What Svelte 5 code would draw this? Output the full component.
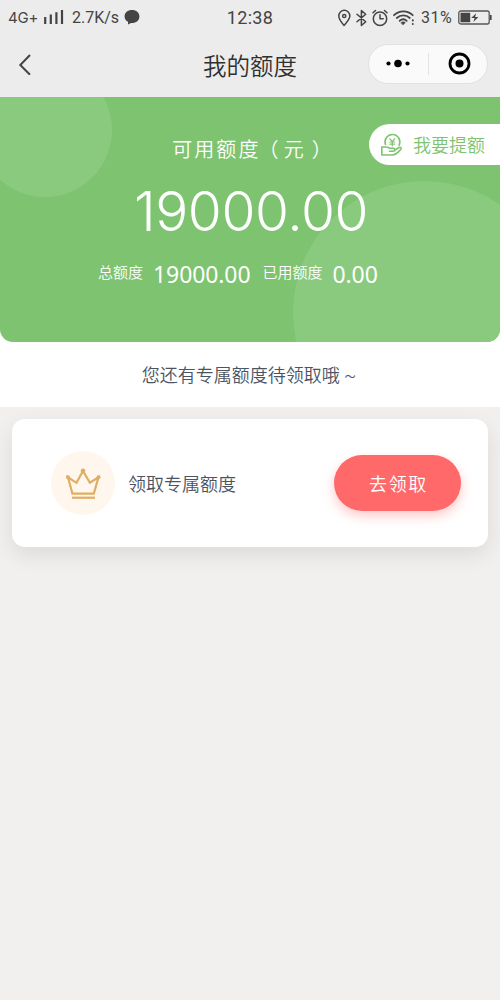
<script>
  const total = "19000.00";
  const used = "0.00";
  const available = "19000.00";
</script>

<style>
  :global(body) {
    margin: 0;
    background: #f1f0ef;
    font-family: Roboto, "Noto Sans CJK SC", sans-serif;
  }

  svg {
    display: block;
    flex: none;
    fill: none;
  }

  .page {
    min-height: 1000px;
    overflow: hidden;
    font-weight: 350;
  }

  .top {
    height: 97px;
    background: #ececec;
    color: #444;
  }

  .status {
    display: grid;
    grid-template-columns: 1fr auto 1fr;
    align-items: center;
    height: 34px;
    padding: 0 8px;
    box-sizing: border-box;
    font-size: 16px;
    font-weight: 400;
    line-height: 34px;
  }
  .left,
  .right {
    display: flex;
    align-items: center;
  }
  .left span {
    white-space: nowrap;
  }
  .network {
    width: 31px;
    margin-top: 1px;
    font-family: Inter, sans-serif;
    font-size: 15px;
    letter-spacing: -0.2px;
  }
  .signal {
    margin: 0 8px 0 5px;
  }
  .speed {
    width: 47px;
  }
  .chat {
    margin-left: 5px;
  }
  .time {
    font-size: 18px;
    letter-spacing: 0.3px;
  }
  .right {
    justify-content: flex-end;
  }
  .percent {
    margin: 0 6px 0 6px;
    letter-spacing: 0.4px;
  }

  .nav {
    display: grid;
    grid-template-columns: 1fr auto 1fr;
    align-items: center;
    height: 59px;
    padding: 0 12px 0 18px;
  }
  h1 {
    margin: 7px 6px 0 0;
    color: #303030;
    font-size: 23.5px;
    font-weight: 350;
    line-height: 32px;
  }
  .capsule {
    display: flex;
    align-items: center;
    justify-self: end;
    box-sizing: border-box;
    width: 120px;
    height: 40px;
    border: 1px solid #e2e2e2;
    border-radius: 20px;
    background: #fafafa;
  }

  .notice-wrap {
    background: #fff;
  }

  .hero {
    position: relative;
    overflow: hidden;
    box-sizing: border-box;
    height: 245px;
    padding-top: 38px;
    border-radius: 0 0 13px 13px;
    background: #7dc370;
    color: #fff;
    text-align: center;
  }
  .bubble {
    position: absolute;
    border-radius: 50%;
    background: #8aca7f;
  }
  .bubble.small {
    left: -22px;
    top: -34px;
    width: 134px;
    height: 134px;
  }
  .bubble.big {
    left: 293px;
    top: 84px;
    width: 263px;
    height: 263px;
  }
  .raise {
    position: absolute;
    top: 27px;
    right: 0;
    display: flex;
    align-items: center;
    box-sizing: border-box;
    width: 131px;
    height: 41px;
    padding-left: 11px;
    border-radius: 21px 0 0 21px;
    background: #fff;
    color: #7dc370;
    font-size: 18px;
    line-height: 41px;
  }
  .raise span {
    padding-top: 2px;
  }
  .raise svg {
    margin-right: 9px;
  }
  .label,
  .amount,
  .detail {
    position: relative;
  }
  .label {
    padding-left: 6px;
    font-size: 20px;
    line-height: 30px;
    letter-spacing: 2.1px;
  }
  .open {
    margin: 0 3px 0 -2px;
  }
  .close {
    margin-left: 6px;
  }
  .amount {
    margin-top: 14px;
    padding-left: 2px;
    font-family: Inter, sans-serif;
    font-size: 55px;
    font-weight: 300;
    line-height: 64px;
    letter-spacing: -0.4px;
  }
  .detail {
    display: flex;
    align-items: center;
    padding: 13px 0 0 98px;
    font-size: 15px;
    line-height: 30px;
  }
  .detail span {
    padding-top: 1px;
  }
  .detail b {
    margin: 3px 12px 0 10px;
    font-family: "Noto Sans", sans-serif;
    font-size: 23px;
    font-weight: 400;
    letter-spacing: -0.1px;
  }

  .notice {
    height: 65px;
    margin: 0;
    padding-right: 2px;
    color: #4b5462;
    font-size: 18px;
    line-height: 67px;
    text-align: center;
  }

  .card {
    display: flex;
    align-items: center;
    box-sizing: border-box;
    height: 128px;
    margin: 12px;
    padding: 0 27px 0 39px;
    border-radius: 13px;
    background: #fff;
    box-shadow: 0 8px 22px rgba(0, 0, 0, 0.09);
  }
  .crown {
    display: flex;
    align-items: center;
    justify-content: center;
    width: 64px;
    height: 64px;
    border-radius: 50%;
    background: #fff6ee;
  }
  .name {
    flex: 1;
    margin-left: 13px;
    color: #4b5462;
    font-size: 18px;
  }
  button {
    width: 127px;
    height: 56px;
    padding: 0 0 0 2px;
    border: 0;
    border-radius: 28px;
    background: #ff6969;
    box-shadow: 0 5px 12px rgba(255, 105, 105, 0.36);
    color: #fff;
    font: inherit;
    font-size: 18px;
    letter-spacing: 1.6px;
  }
</style>

<div class="page">
  <div class="top">
    <div class="status">
      <div class="left">
        <span class="network">4G+</span>
        <svg class="signal" width="20" height="16" viewBox="0 0 20 16" stroke="#444" stroke-width="2.200">
          <path d="M1.200 7v7M6.800 4.500v9.500M12.400 2.200v11.800M18 0v14" />
        </svg>
        <span class="speed">2.7K/s</span>
        <svg class="chat" width="16" height="15" viewBox="0 0 16 15">
          <path fill="#444" d="M8 0C3.700 0 .6 2.600.6 6.400c0 2.600 1.300 4.400 3.500 5.400L4 14.500l3.200-1.500c4.900.2 8.200-2.600 8.200-6.600C15.400 2.600 12.300 0 8 0z" />
        </svg>
      </div>
      <span class="time">12:38</span>
      <div class="right">
        <svg width="77" height="18" viewBox="0 0 77 18" stroke="#444" stroke-width="1.500" stroke-linecap="round" stroke-linejoin="round">
          <path d="M6 16.500C3.500 13.500.8 10.300.8 7a5.500 5.700 0 0 1 11 0c0 3.300-3.200 6.500-5.800 9.500z" />
          <circle cx="6.200" cy="7" r="1.600" />
          <path d="M19 5.200l8.700 7.600-4.300 3.700v-15l4.300 3.700-8.700 7.600" />
          <circle cx="42" cy="9.700" r="6.700" />
          <path d="M42 5.800v4h3.200M35 3.800l2.500-2.300M49 3.800l-2.500-2.300" />
          <path d="M56 6.200c5.400-5 13.500-5 18.700 0M58.800 9c3.800-3.500 9.300-3.500 13 0M61.700 11.800c2.200-1.900 5-1.900 7 0" stroke-width="1.800" />
          <path d="M63.100 13.600c1.200-1 3-1 4.200 0l-2.100 2.200z" fill="#444" stroke-width=".6" />
          <path d="M74.800 11.300v.1M74.800 15v.1" stroke-width="2" />
        </svg>
        <span class="percent">31%</span>
        <svg width="34" height="16" viewBox="0 0 34 16">
          <rect x=".8" y="1" width="30.400" height="13" rx="2" stroke="#555" stroke-width="1.300" />
          <path d="M2.500 2.700h9.700v9.600H2.500zM32 5h1.600v5H32z" fill="#444" />
          <path d="M18.200 3.200l-5 4.900h3.400l-1.200 4 5-5h-3.300z" fill="#444" />
        </svg>
      </div>
    </div>
    <div class="nav">
      <svg width="14" height="22" viewBox="0 0 14 22" stroke="#444" stroke-width="2">
        <path d="M12 2L2.300 12l9.700 9.800" />
      </svg>
      <h1>我的额度</h1>
      <div class="capsule">
        <svg width="118" height="38" viewBox="0 0 118 38">
          <path d="M59.500 8v22" stroke="#e4e4e4" />
          <g fill="#000">
            <circle cx="19.500" cy="18.500" r="2.100" />
            <circle cx="29" cy="18.500" r="3.800" />
            <circle cx="38.500" cy="18.500" r="2.100" />
            <circle cx="90.500" cy="18.500" r="4" />
          </g>
          <circle cx="90.500" cy="18.500" r="9.500" stroke="#000" stroke-width="2.800" />
        </svg>
      </div>
    </div>
  </div>

  <div class="notice-wrap">
    <div class="hero">
      <div class="bubble small"></div>
      <div class="bubble big"></div>
      <div class="label">可用额度<span class="open">（</span>元<span class="close">）</span></div>
      <div class="amount">{available}</div>
      <div class="detail">
        <span>总额度</span><b>{total}</b>
        <span>已用额度</span><b>{used}</b>
      </div>
      <div class="raise">
        <svg width="24" height="24" viewBox="0 0 24 24" stroke="#7dc370" stroke-width="1.600" stroke-linecap="round" stroke-linejoin="round">
          <path d="M5.500 11.500a7.400 7.400 0 1 1 13.500.8" />
          <path d="M9.800 5.600l2.500 3 2.500-3M12.300 8.600v4.400M10 9h4.600M10 11.200h4.600" stroke-width="1.200" />
          <path d="M6.200 14H1.800v8h10.500c3.800 0 6.200-3.200 8.400-5.500 1.200-1.400-.2-2.800-1.600-2l-4 2.500M6.200 14c2 0 2.600 1.300 4.500 1.300h2.500c2.300 0 2.300 2.900 0 2.900H9.500" />
        </svg>
        <span>我要提额</span>
      </div>
    </div>
    <p class="notice">您还有专属额度待领取哦 ~</p>
  </div>

  <div class="card">
    <div class="crown">
      <svg width="36" height="32" viewBox="0 0 36 32" stroke="#e0ae62" stroke-width="2.200">
        <path d="M3 10.300l4.400 16.300h21.400l4.700-16.300-8.600 5.500L18 4l-6.500 11.800z" />
        <path d="M7 30.700h23" />
        <g fill="#e0ae62" stroke="none">
          <circle cx="3" cy="10.300" r="2" />
          <circle cx="18" cy="3.700" r="2.300" />
          <circle cx="33.500" cy="10.300" r="2" />
        </g>
      </svg>
    </div>
    <span class="name">领取专属额度</span>
    <button>去领取</button>
  </div>
</div>
